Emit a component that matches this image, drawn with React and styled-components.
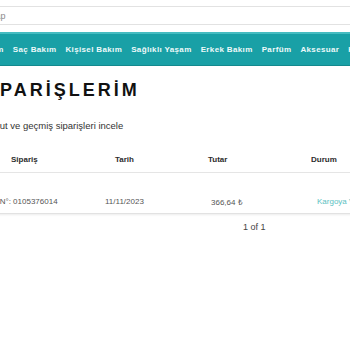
import React from "react";
import styled, { createGlobalStyle } from "styled-components";

const GlobalStyle = createGlobalStyle`
  html, body {
    margin: 0;
    padding: 0;
    background: #ffffff;
    font-family: "Liberation Sans", Arial, sans-serif;
    overflow: hidden;
  }
  * { box-sizing: border-box; }
`;

const Page = styled.div`
  width: 350px;
  height: 350px;
  overflow: hidden;
  background: #fff;
`;

const SearchBar = styled.div`
  margin: 6px 0 0 -46px;
  height: 19px;
  border-top: 1px solid #e2e2e2;
  border-bottom: 1px solid #e2e2e2;
  display: flex;
  align-items: center;
  padding-left: 8px;
  width: 500px;
`;

const SearchInput = styled.input`
  border: none;
  outline: none;
  background: transparent;
  font-family: inherit;
  font-size: 9px;
  color: #888;
  width: 100%;
  padding: 0;
  &::placeholder {
    color: #8a8a8a;
  }
`;

const Nav = styled.nav`
  margin-top: 7px;
  height: 34px;
  background: #19a0a6;
  border-top: 2px solid #45bcc1;
  border-bottom: 1px solid #13898e;
  display: flex;
  align-items: center;
  overflow: hidden;
`;

const NavList = styled.ul`
  list-style: none;
  margin: 0 0 0 -39px;
  padding: 0;
  display: flex;
  gap: 9px;
  white-space: nowrap;
`;

const NavItem = styled.li`
  color: #eefafa;
  font-size: 8px;
  font-weight: bold;
  letter-spacing: 0.36px;
`;

const Content = styled.main`
  margin-left: -23px;
  width: 420px;
`;

const Title = styled.h1`
  margin: 13px 0 0;
  font-size: 18px;
  line-height: 22px;
  font-weight: bold;
  letter-spacing: 3px;
  color: #111;
`;

const Subtitle = styled.p`
  margin: 19px 0 0;
  font-size: 9.5px;
  line-height: 11px;
  color: #333;
`;

const Table = styled.div`
  margin: 16px 0 0 -4px;
  width: 430px;
`;

const TableRow = styled.div`
  display: grid;
  grid-template-columns: ${(p) => p.$cols};
  padding-left: ${(p) => p.$indent}px;
  padding-top: ${(p) => p.$top || 0}px;
  align-items: center;
  height: ${(p) => p.$height}px;
  border-bottom: ${(p) => p.$border};
  box-shadow: ${(p) => p.$shadow || "none"};
`;

const HeadCell = styled.div`
  font-size: 8px;
  font-weight: bold;
  color: #2c2c2c;
`;

const Cell = styled.div`
  font-size: 8px;
  color: ${(p) => p.$color || "#555"};
  white-space: nowrap;
`;

const Pager = styled.div`
  margin-top: 8px;
  padding-left: 266px;
  font-size: 9px;
  line-height: 11px;
  color: #444;
`;

const navItems = [
  "Cilt Bakım",
  "Saç Bakım",
  "Kişisel Bakım",
  "Sağlıklı Yaşam",
  "Erkek Bakım",
  "Parfüm",
  "Aksesuar",
  "Kampanyalar",
];

const orders = [
  { no: "0105376014", date: "11/11/2023", total: "366,64 ₺", status: "Kargoya Verildi" },
];

export default function App() {
  return (
    <Page>
      <GlobalStyle />
      <SearchBar>
        <SearchInput placeholder="Arama yap" />
      </SearchBar>
      <Nav>
        <NavList>
          {navItems.map((item) => (
            <NavItem key={item}>{item}</NavItem>
          ))}
        </NavList>
      </Nav>
      <Content>
        <Title>SİPARİŞLERİM</Title>
        <Subtitle>Mevcut ve geçmiş siparişleri incele</Subtitle>
        <Table>
          <TableRow $cols="104px 93px 103px 1fr" $indent={38} $height={26} $border="1px solid #e6e6e6">
            <HeadCell>Sipariş</HeadCell>
            <HeadCell>Tarih</HeadCell>
            <HeadCell>Tutar</HeadCell>
            <HeadCell>Durum</HeadCell>
          </TableRow>
          {orders.map((o) => (
            <TableRow
              key={o.no}
              $cols="132px 106px 106px 1fr"
              $indent={0}
              $top={17}
              $height={41}
              $border="1px solid #e2e2e2"
              $shadow="0 1px 2px rgba(0,0,0,0.08)"
            >
              <Cell>Sipariş N°: {o.no}</Cell>
              <Cell>{o.date}</Cell>
              <Cell>{o.total}</Cell>
              <Cell $color="#5bbfc2">{o.status}</Cell>
            </TableRow>
          ))}
        </Table>
        <Pager>1 of 1</Pager>
      </Content>
    </Page>
  );
}
